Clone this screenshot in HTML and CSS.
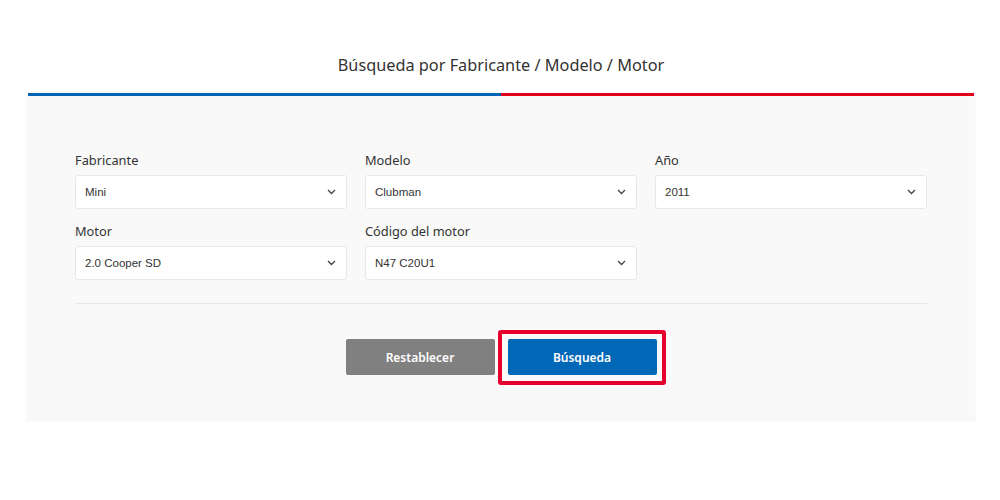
FILE: index.html
```html
<!DOCTYPE html>
<html lang="es">
<head>
<meta charset="utf-8">
<title>Búsqueda</title>
<link rel="stylesheet" href="styles.css">
</head>
<body>
<div class="wrap">
  <h1 class="title">Búsqueda por Fabricante / Modelo / Motor</h1>
  <div class="card">
    <div class="grid">
      <div class="field">
        <label class="label">Fabricante</label>
        <div class="select"><span>Mini</span><svg class="chev" width="9" height="6" viewBox="0 0 9 6"><path d="M1 1l3.5 3.5L8 1" fill="none" stroke="#444" stroke-width="1.3"/></svg></div>
      </div>
      <div class="field">
        <label class="label">Modelo</label>
        <div class="select"><span>Clubman</span><svg class="chev" width="9" height="6" viewBox="0 0 9 6"><path d="M1 1l3.5 3.5L8 1" fill="none" stroke="#444" stroke-width="1.3"/></svg></div>
      </div>
      <div class="field">
        <label class="label">Año</label>
        <div class="select"><span>2011</span><svg class="chev" width="9" height="6" viewBox="0 0 9 6"><path d="M1 1l3.5 3.5L8 1" fill="none" stroke="#444" stroke-width="1.3"/></svg></div>
      </div>
      <div class="field">
        <label class="label">Motor</label>
        <div class="select"><span>2.0 Cooper SD</span><svg class="chev" width="9" height="6" viewBox="0 0 9 6"><path d="M1 1l3.5 3.5L8 1" fill="none" stroke="#444" stroke-width="1.3"/></svg></div>
      </div>
      <div class="field">
        <label class="label">Código del motor</label>
        <div class="select"><span>N47 C20U1</span><svg class="chev" width="9" height="6" viewBox="0 0 9 6"><path d="M1 1l3.5 3.5L8 1" fill="none" stroke="#444" stroke-width="1.3"/></svg></div>
      </div>
    </div>
    <hr class="divider">
    <div class="actions">
      <button class="btn btn-reset">Restablecer</button>
      <span class="highlight"><button class="btn btn-search">Búsqueda</button></span>
    </div>
  </div>
</div>
</body>
</html>
```

FILE: styles.css
```css
* { box-sizing: border-box; }
html, body { margin: 0; padding: 0; background: #fff; }
body { font-family: "Noto Sans", "Open Sans", sans-serif; color: #333; }
.wrap { width: 946px; margin-left: 28px; }
.title {
  margin: 0;
  padding-top: 53px;
  height: 93px;
  text-align: center;
  font-size: 16.3px;
  line-height: 24px;
  font-weight: 400;
  color: #333;
}
.card {
  background: #f9f9f9;
  border-top: 3px solid;
  border-image: linear-gradient(to right, #0063b6 50%, #e3001b 50%) 1;
  box-shadow: 0 1px 3px rgba(0,0,0,0.09);
  padding: 54px 47px 47px;
}
.grid {
  display: grid;
  grid-template-columns: repeat(3, 272px);
  column-gap: 18px;
  row-gap: 12px;
}
.label {
  display: block;
  font-size: 12.8px;
  line-height: 20px;
  margin-bottom: 5px;
  color: #333;
}
.select {
  height: 34px;
  background: #fff;
  border: 1px solid #ebe7e3;
  border-radius: 3px;
  display: flex;
  align-items: center;
  justify-content: space-between;
  padding: 0 10px 0 9px;
  font-family: "Liberation Sans", Arial, sans-serif;
  font-size: 11.5px;
  color: #333;
}
.divider {
  border: 0;
  border-top: 1px solid #e6e6e6;
  margin: 23px 0 35px;
}
.actions {
  display: flex;
  justify-content: center;
  gap: 13px;
}
.btn {
  width: 149px;
  height: 36px;
  border: 0;
  border-radius: 2px;
  color: #fff;
  font-family: "Noto Sans", sans-serif;
  font-weight: 600;
  font-size: 12px;
  cursor: pointer;
  display: block;
}
.btn-reset { background: #808080; }
.btn-search { background: #0068b7; }
.highlight {
  display: block;
  border: 4px solid #e6002d;
  border-radius: 3px;
  padding: 5px 5px 6px 6px;
  margin: -9px -9px -10px -10px;
}
```
